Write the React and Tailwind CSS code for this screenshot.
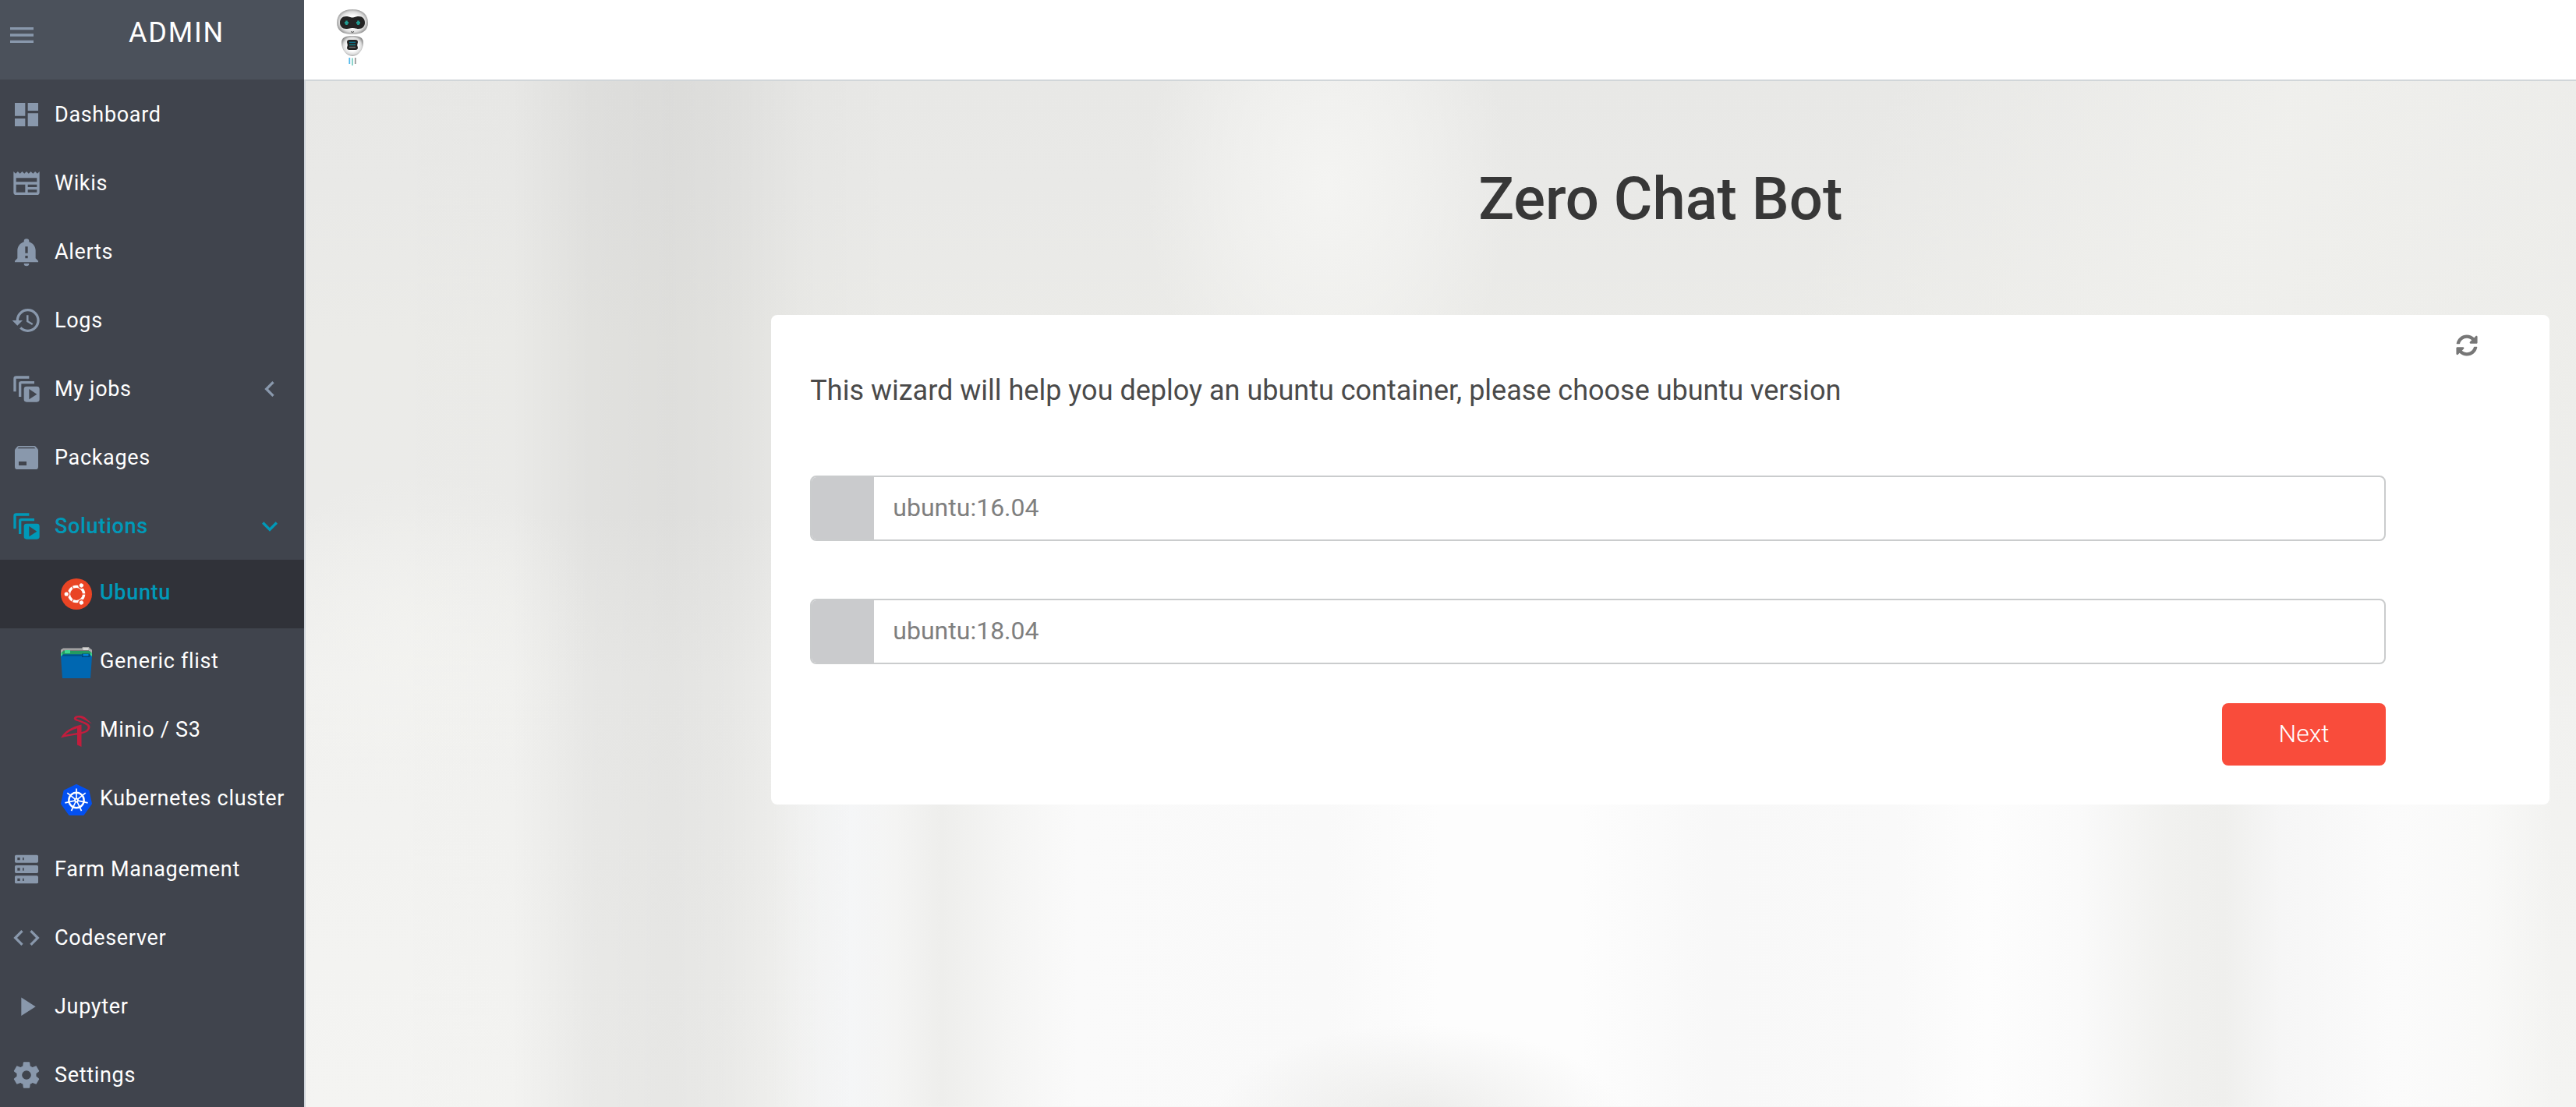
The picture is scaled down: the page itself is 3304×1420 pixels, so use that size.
import React, { useState } from "react";

const ICONS = {
  menu: "M3,6H21V8H3V6M3,11H21V13H3V11M3,16H21V18H3V16Z",
  dashboard: "M13,3V9H21V3M13,21H21V11H13M3,21H11V15H3M3,13H11V3H3V13Z",
  wikis:
    "M20,11H4V8H20M20,15H13V13H20M20,19H13V17H20M11,19H4V13H11M20.33,4.67L18.67,3L17,4.67L15.33,3L13.67,4.67L12,3L10.33,4.67L8.67,3L7,4.67L5.33,3L3.67,4.67L2,3V19A2,2 0 0,0 4,21H20A2,2 0 0,0 22,19V3L20.33,4.67Z",
  alerts:
    "M21,19V20H3V19L5,17V11C5,7.9 7.03,5.17 10,4.29C10,4.19 10,4.1 10,4A2,2 0 0,1 12,2A2,2 0 0,1 14,4C14,4.1 14,4.19 14,4.29C16.97,5.17 19,7.9 19,11V17L21,19M14,21A2,2 0 0,1 12,23A2,2 0 0,1 10,21M13,8H11V13H13V8M13,15H11V17H13V15Z",
  logs: "M13.5,8H12V13L16.28,15.54L17,14.33L13.5,12.25V8M13,3A9,9 0 0,0 4,12H1L4.96,16.03L9,12H6A7,7 0 0,1 13,5A7,7 0 0,1 20,12A7,7 0 0,1 13,19C11.07,19 9.32,18.21 8.06,16.94L6.64,18.36C8.27,20 10.5,21 13,21A9,9 0 0,0 22,12A9,9 0 0,0 13,3",
  jobs: "M4,2A2,2 0 0,0 2,4V14H4V4H14V2H4M8,6A2,2 0 0,0 6,8V18H8V8H18V6H8M12,10A2,2 0 0,0 10,12V20A2,2 0 0,0 12,22H20A2,2 0 0,0 22,20V12A2,2 0 0,0 20,10H12M14,12L20,16L14,20V12Z",
  packages:
    "M5.12,5L5.93,4H17.93L18.87,5M20.54,5.23L19.15,3.55C18.88,3.21 18.47,3 18,3H6C5.53,3 5.12,3.21 4.84,3.55L3.46,5.23C3.17,5.57 3,6 3,6.5V19A2,2 0 0,0 5,21H19A2,2 0 0,0 21,19V6.5C21,6 20.83,5.57 20.54,5.23M6,18H12V15H6V18Z",
  farm: "M4,1H20A1,1 0 0,1 21,2V6A1,1 0 0,1 20,7H4A1,1 0 0,1 3,6V2A1,1 0 0,1 4,1M4,9H20A1,1 0 0,1 21,10V14A1,1 0 0,1 20,15H4A1,1 0 0,1 3,14V10A1,1 0 0,1 4,9M4,17H20A1,1 0 0,1 21,18V22A1,1 0 0,1 20,23H4A1,1 0 0,1 3,22V18A1,1 0 0,1 4,17M9,5H10V3H9V5M9,13H10V11H9V13M9,21H10V19H9V21M5,3V5H7V3H5M5,11V13H7V11H5M5,19V21H7V19H5Z",
  code: "M14.6,16.6L19.2,12L14.6,7.4L16,6L22,12L16,18L14.6,16.6M9.4,16.6L4.8,12L9.4,7.4L8,6L2,12L8,18L9.4,16.6Z",
  play: "M8,5.14V19.14L19,12.14L8,5.14Z",
  settings:
    "M12,15.5A3.5,3.5 0 0,1 8.5,12A3.5,3.5 0 0,1 12,8.5A3.5,3.5 0 0,1 15.5,12A3.5,3.5 0 0,1 12,15.5M19.43,12.97C19.47,12.65 19.5,12.33 19.5,12C19.5,11.67 19.47,11.34 19.43,11L21.54,9.37C21.73,9.22 21.78,8.95 21.66,8.73L19.66,5.27C19.54,5.05 19.27,4.96 19.05,5.05L16.56,6.05C16.04,5.66 15.5,5.32 14.87,5.07L14.5,2.42C14.46,2.18 14.25,2 14,2H10C9.75,2 9.54,2.18 9.5,2.42L9.13,5.07C8.5,5.32 7.96,5.66 7.44,6.05L4.95,5.05C4.73,4.96 4.46,5.05 4.34,5.27L2.34,8.73C2.21,8.95 2.27,9.22 2.46,9.37L4.57,11C4.53,11.34 4.5,11.67 4.5,12C4.5,12.33 4.53,12.65 4.57,12.97L2.46,14.63C2.27,14.78 2.21,15.05 2.34,15.27L4.34,18.73C4.46,18.95 4.73,19.03 4.95,18.95L7.44,17.94C7.96,18.34 8.5,18.68 9.13,18.93L9.5,21.58C9.54,21.82 9.75,22 10,22H14C14.25,22 14.46,21.82 14.5,21.58L14.87,18.93C15.5,18.67 16.04,18.34 16.56,17.94L19.05,18.95C19.27,19.03 19.54,18.95 19.66,18.73L21.66,15.27C21.78,15.05 21.73,14.78 21.54,14.63L19.43,12.97Z",
  left: "M15.41,16.58L10.83,12L15.41,7.41L14,6L8,12L14,18L15.41,16.58Z",
  down: "M7.41,8.58L12,13.17L16.59,8.58L18,10L12,16L6,10L7.41,8.58Z",
};

function Icon({ name }) {
  return (
    <svg viewBox="0 0 24 24" className="size-10 shrink-0" fill="currentColor" fillRule="evenodd" aria-hidden="true">
      <path d={ICONS[name]} />
    </svg>
  );
}

function UbuntuLogo() {
  return (
    <svg viewBox="-20 -20 40 40" className="size-10 shrink-0" aria-hidden="true">
      <circle r="20" fill="#e94424" />
      <circle r="9.6" fill="none" stroke="#fff" strokeWidth="3.4" />
      {[0, 120, 240].map((a) => (
        <g key={a} transform={`rotate(${a})`}>
          <path d="M7 0H13" stroke="#e94424" strokeWidth="1.2" />
          <circle cx="-12.8" r="3.4" fill="#fff" stroke="#e94424" strokeWidth="1.6" />
        </g>
      ))}
    </svg>
  );
}

function FlistLogo() {
  return (
    <svg viewBox="0 0 40 40" className="size-10 shrink-0" aria-hidden="true">
      <path d="M0 3.5L3 1.5H27L28 0H36L37 1.5L40 3.5V10H0Z" fill="#a9a9a9" />
      <path d="M28.5 1.5H35.5V4H28.5Z" fill="#e6e6e6" />
      <path d="M3 4.3H36" stroke="#777" strokeWidth="1.2" />
      <path d="M0 8L3 5H37L40 8V13H0Z" fill="#239a62" />
      <path d="M0 8.5L2 7V12H0ZM40 8.5L38 7V12H40ZM5 4H12V8H5Z" fill="#3fd690" />
      <path d="M0 12L3 9.5H37L40 12L38 40H2Z" fill="#0067b1" />
      <path d="M1.5 11.5L3 9.5H37L38.5 11.5Z" fill="#004f86" />
      <path d="M27 8.5H37V13H27Z" fill="#00467a" />
      <path d="M28.5 9H35.5V11.5H28.5Z" fill="#0084d6" />
    </svg>
  );
}

function MinioLogo() {
  return (
    <svg viewBox="0 0 40 40" className="size-10 shrink-0" fill="#c31d3d" fillRule="evenodd" aria-hidden="true">
      <path d="M0 28.5C4 21 13 14.5 26.5 11.5V21C32 20 35 17.5 34.5 14.5C34 12 29 9.5 19.5 6.5C15 5 16 0 23 0C28 0 30 1 33 4L40 10.5L27.5 3.8C25 2.5 22 2.2 20.5 3C19.5 3.7 20 4.2 22 4.9C31 8 37.5 10 37.5 14.5C37.5 19 33 22 26.5 23.5V40L21 37.5V24.5C14 25.5 6 26.5 0 28.5ZM21 16.3C15 18 8.5 21.5 6 24.5C10 24 15.5 23.2 21 22Z" />
    </svg>
  );
}

function KubernetesLogo() {
  const spokes = [0, 1, 2, 3, 4, 5, 6].map((i) => (i * 360) / 7);
  return (
    <svg viewBox="-20 -20 40 40" className="size-10 shrink-0" aria-hidden="true">
      <path
        d="M0 -19L15.5 -11.5L19 5L9 19H-9L-19 5L-15.5 -11.5Z"
        fill="#0350f0"
        stroke="#0350f0"
        strokeWidth="2"
        strokeLinejoin="round"
      />
      <g transform="translate(0 0.5)">
        <circle r="9.7" fill="none" stroke="#fff" strokeWidth="2.4" />
        {spokes.map((a) => (
          <path key={a} transform={`rotate(${a})`} d="M0 -2.5V-15" stroke="#fff" strokeWidth="1.7" />
        ))}
        <circle r="3" fill="#fff" />
        <circle r="1" fill="#0350f0" />
      </g>
    </svg>
  );
}

function RobotLogo() {
  return (
    <svg viewBox="0 0 40 74" className="h-[74px] w-10" role="img" aria-label="Zero robot">
      <defs>
        <radialGradient id="shell" cx="0.5" cy="0.5" r="0.55">
          <stop offset="0.45" stopColor="#fff" />
          <stop offset="0.75" stopColor="#dcdcdc" />
          <stop offset="1" stopColor="#858585" />
        </radialGradient>
      </defs>
      <path d="M20 0C33 0 40 7 40 17C40 27 33 32 20 32C7 32 0 27 0 17C0 7 7 0 20 0Z" fill="url(#shell)" />
      <path
        d="M12 9C16 9 17 10.5 20 10.5C23 10.5 24 9 28 9C33 9 36 12.5 36 17C36 21.5 33 25 28 25C24 25 23 24 20 24C17 24 16 25 12 25C7 25 4 21.5 4 17C4 12.5 7 9 12 9Z"
        fill="#242424"
      />
      <path d="M12.5 14.5V20M10 17.2H15M27.5 14.5V20M25 17.2H30" stroke="#209c92" strokeWidth="2.6" />
      <path d="M18 28.5Q20 30.5 22 28.5" stroke="#444" fill="none" />
      <path d="M20 34C29 34 34 36 34 43C34 51 28 60 20 60C12 60 6 51 6 43C6 36 11 34 20 34Z" fill="url(#shell)" />
      <path
        d="M16 39H24Q27 39 27 42Q25.5 45.5 27 49Q27 52 24 52H16Q13 52 13 49Q14.5 45.5 13 42Q13 39 16 39Z"
        fill="#222"
      />
      <path d="M16 42.3H24" stroke="#10708a" strokeWidth="1.4" />
      <path d="M16 45.5H24" stroke="#11808a" strokeWidth="1.4" />
      <path d="M16 48.6H24" stroke="#777" strokeWidth="1.4" />
      <path d="M16.3 62V70" stroke="#52b9ec" strokeWidth="1.8" />
      <path d="M20 62.5V72" stroke="#7ed0c6" strokeWidth="1.8" />
      <path d="M23.8 62V70" stroke="#9a9a9a" strokeWidth="1.8" />
    </svg>
  );
}

function RefreshIcon() {
  return (
    <svg viewBox="0 0 512 512" className="size-7" fill="currentColor" aria-hidden="true">
      <path d="M370.72 133.28C339.458 104.008 298.888 87.962 255.848 88c-77.458.068-144.328 53.178-162.791 126.85-1.344 5.363-6.122 9.15-11.651 9.15H24.103c-7.498 0-13.194-6.807-11.807-14.176C33.933 94.924 134.813 8 256 8c66.448 0 126.791 26.136 171.315 68.685L463.03 40.97C478.149 25.851 504 36.559 504 57.941V192c0 13.255-10.745 24-24 24H345.941c-21.382 0-32.09-25.851-16.971-40.971l41.75-41.749zM32 296h134.059c21.382 0 32.09 25.851 16.971 40.971l-41.75 41.75c31.262 29.273 71.835 45.319 114.876 45.28 77.418-.07 144.315-53.144 162.787-126.849 1.344-5.363 6.122-9.15 11.651-9.15h57.304c7.498 0 13.194 6.807 11.807 14.176C478.067 417.076 377.187 504 256 504c-66.448 0-126.791-26.136-171.315-68.685L48.97 471.03C33.851 486.149 8 475.441 8 454.059V320c0-13.255 10.745-24 24-24z" />
    </svg>
  );
}

const NAV_TOP = [
  { icon: "dashboard", label: "Dashboard" },
  { icon: "wikis", label: "Wikis" },
  { icon: "alerts", label: "Alerts" },
  { icon: "logs", label: "Logs" },
  { icon: "jobs", label: "My jobs", chevron: "left" },
  { icon: "packages", label: "Packages" },
  { icon: "jobs", label: "Solutions", chevron: "down", active: true },
];

const NAV_SUB = [
  { Logo: UbuntuLogo, label: "Ubuntu", active: true },
  { Logo: FlistLogo, label: "Generic flist" },
  { Logo: MinioLogo, label: "Minio / S3" },
  { Logo: KubernetesLogo, label: "Kubernetes cluster" },
];

const NAV_BOTTOM = [
  { icon: "farm", label: "Farm Management" },
  { icon: "code", label: "Codeserver" },
  { icon: "play", label: "Jupyter" },
  { icon: "settings", label: "Settings" },
];

function NavItem({ icon, label, chevron, active }) {
  return (
    <a
      href="#"
      className={
        "flex h-[88px] items-center gap-4 pt-0.5 pl-3.5 pr-6 " +
        (active ? "font-medium text-[#0099b8]" : "text-[#8998ac]")
      }
    >
      <Icon name={icon} />
      <span className={"grow " + (active ? "" : "text-white")}>{label}</span>
      {chevron && <Icon name={chevron} />}
    </a>
  );
}

function SubItem({ Logo, label, active }) {
  return (
    <a
      href="#"
      className={
        "flex h-[88px] items-center gap-2.5 pl-[78px] whitespace-nowrap " +
        (active ? "bg-[#303239] font-medium text-[#0099b8]" : "text-white")
      }
    >
      <Logo />
      <span className="pb-1">{label}</span>
    </a>
  );
}

const VERSIONS = ["ubuntu:16.04", "ubuntu:18.04"];

export default function App() {
  const [version, setVersion] = useState("");
  return (
    <div className="flex h-screen overflow-hidden font-[Roboto,sans-serif]">
      <aside className="w-[390px] shrink-0 bg-[#40444d] text-[27px] leading-10 tracking-wide">
        <div className="flex h-[102px] items-start bg-[#4b515b] pl-2 pr-[102px]">
          <button type="button" aria-label="Toggle menu" className="mt-[25px] text-[#8998ac]">
            <Icon name="menu" />
          </button>
          <span className="mt-[17px] grow text-right text-[36px] leading-[50px] tracking-wider text-white">ADMIN</span>
        </div>
        <nav aria-label="Admin">
          {NAV_TOP.map((item) => (
            <NavItem key={item.label} {...item} />
          ))}
          {NAV_SUB.map((item) => (
            <SubItem key={item.label} {...item} />
          ))}
          {NAV_BOTTOM.map((item) => (
            <NavItem key={item.label} {...item} />
          ))}
        </nav>
      </aside>

      <div className="flex min-w-0 grow flex-col">
        <header className="flex h-[104px] shrink-0 items-start border-b-2 border-[#d1d6d9] bg-white pl-[42px] pt-3">
          <a href="#">
            <RobotLogo />
          </a>
        </header>

        <main className="grow border-l-2 border-[#d1d6dc] bg-[#f1f1ef] bg-[linear-gradient(90deg,rgba(0,0,0,0)_0%,rgba(0,0,0,0.005)_9%,rgba(0,0,0,0.045)_12.5%,rgba(0,0,0,0.055)_16%,rgba(0,0,0,0.045)_18.5%,rgba(0,0,0,0.01)_22%,rgba(0,0,0,0)_26%),radial-gradient(9%_9%_at_49%_101%,rgba(232,232,230,0.8),rgba(232,232,230,0)),radial-gradient(8%_26%_at_45%_10%,rgba(244,244,242,1),rgba(244,244,242,0.6)_50%,rgba(244,244,242,0)),linear-gradient(115deg,rgba(240,240,237,0)_62%,rgba(240,240,237,0.9)_78%,rgba(240,240,237,0.3)_100%),radial-gradient(8%_16%_at_5%_54%,rgba(244,244,241,0.6),rgba(244,244,241,0)),linear-gradient(90deg,rgba(240,240,238,0)_20.5%,#f6f7f8_24%,#f4f4f3_26%,#eeeeec_28%,#f5f5f4_31%,#fafafa_34%,#f9f9f9_45%,#fdfdfd_50%,#fdfdfd_56%,#f8f8f8_62%,#f9f9f9_70%,#fdfdfd_74%,#fafafa_78%,#f1f1ef_82%,#efefed_84.5%,#f6f6f6_87%,#fbfbfb_92%,#f9f9f8_96%,rgba(246,246,245,0)_99%),linear-gradient(180deg,#e8e8e6_0%,#e9e9e7_10%,#ebebe8_25%,#ebebe9_42%,#f1f1ef_58%,#f4f4f2_100%)] bg-[size:100%_100%,100%_100%,100%_100%,100%_60%,100%_100%,100%_42%,100%_100%] bg-[position:0_0,0_0,0_0,0_0,0_0,0_100%,0_0] bg-no-repeat pl-[20.5%] pr-[34px] pt-[103px]">
          <h1 className="text-center text-[76px] leading-[96px] font-medium text-[#373737]">Zero Chat Bot</h1>

          <section className="mt-[101px] rounded-lg bg-white pb-[50px]">
            <div className="flex h-[70px] justify-end pr-[92px] pt-[25px]">
              <button type="button" aria-label="Restart" className="h-7 text-[#777777]">
                <RefreshIcon />
              </button>
            </div>
            <form className="pl-[50px] pr-[210px]" onSubmit={(e) => e.preventDefault()}>
              <p id="question" className="text-[36px] leading-[54px] text-[#4a4a4a]">
                This wizard will help you deploy an ubuntu container, please choose ubuntu version
              </p>
              <div role="radiogroup" aria-labelledby="question" className="mt-[82px] flex flex-col gap-[74px]">
                {VERSIONS.map((v) => (
                  <label
                    key={v}
                    className="flex h-[84px] cursor-pointer items-center overflow-hidden rounded-lg border-2 border-[#cacccd] text-[32px] leading-10 text-[#7f7f7f]"
                  >
                    <input
                      type="radio"
                      name="version"
                      value={v}
                      checked={version === v}
                      onChange={() => setVersion(v)}
                      className="mr-6 h-full w-20 shrink-0 appearance-none bg-[#cacbcd] checked:bg-[#f94c3b]"
                    />
                    <span className="pb-0.5">{v}</span>
                  </label>
                ))}
              </div>
              <div className="mt-[50px] flex justify-end">
                <button
                  type="submit"
                  className="h-20 w-[210px] rounded-lg bg-[#f94c3b] pb-0.5 text-[32px] leading-10 font-light text-white"
                >
                  Next
                </button>
              </div>
            </form>
          </section>
        </main>
      </div>
    </div>
  );
}
